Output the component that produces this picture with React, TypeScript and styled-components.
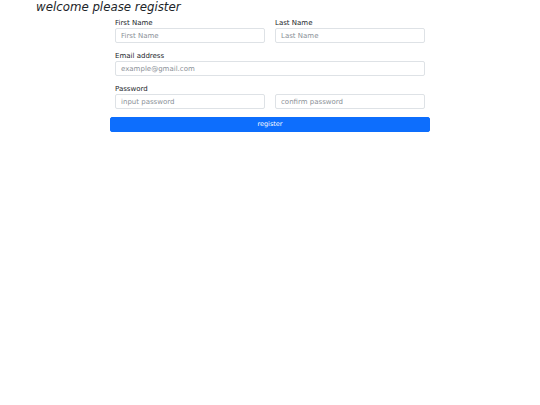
import React, { useState } from 'react'
import styled, { createGlobalStyle } from 'styled-components';

const GlobalStyle = createGlobalStyle`
  body {
    margin: 0;
    background: #fff;
    font-family: "DejaVu Sans", sans-serif;
    color: #212529;
  }
`;

const Page = styled.div`
  width: 540px;
  height: 405px;
`;

const Title = styled.h1`
  margin: 0 0 0 36px;
  font-size: 11.8px;
  line-height: 14px;
  font-weight: 400;
  font-style: italic;
  color: #212529;
`;

const Form = styled.form`
  margin-top: 5px;
  display: flex;
  flex-direction: column;
  align-items: center;
  gap: 9px;
`;

const Row = styled.div<{ cols: number }>`
  width: 310px;
  display: grid;
  grid-template-columns: ${(p) => `repeat(${p.cols}, 1fr)`};
  column-gap: 10px;
`;

const Field = styled.div`
  display: flex;
  flex-direction: column;
`;

const Label = styled.label`
  font-size: 7px;
  line-height: 9px;
  height: 9px;
  margin-bottom: 0;
  color: #212529;
`;

const Input = styled.input`
  box-sizing: border-box;
  width: 100%;
  height: 15px;
  margin: 0;
  padding: 0 5px;
  border: 1px solid #dee2e6;
  border-radius: 2px;
  background: #fff;
  font-family: "DejaVu Sans", sans-serif;
  font-size: 7px;
  color: #212529;
  outline: none;

  &::placeholder {
    color: #8a9097;
  }
`;

const Spacer = styled.div`
  height: 9px;
`;

const RegisterButton = styled.button`
  box-sizing: border-box;
  width: 320px;
  height: 15px;
  margin-top: -1px;
  padding: 0;
  border: 1px solid #0d6efd;
  border-radius: 2px;
  background: #0d6efd;
  color: #fff;
  font-family: "DejaVu Sans", sans-serif;
  font-size: 6.5px;
  line-height: 13px;
`;

function App() {
  const [first, setFirst] = useState('');
  const [last, setLast] = useState('');
  const [email, setEmail] = useState('');
  const [password, setPassword] = useState('');
  const [confirm, setConfirm] = useState('');

  return (
    <Page>
      <GlobalStyle />
      <Title>welcome please register</Title>
      <Form onSubmit={(e) => e.preventDefault()}>
        <Row cols={2}>
          <Field>
            <Label>First Name</Label>
            <Input placeholder='First Name' value={first} onChange={(e) => setFirst(e.target.value)} />
          </Field>
          <Field>
            <Label>Last Name</Label>
            <Input placeholder='Last Name' value={last} onChange={(e) => setLast(e.target.value)} />
          </Field>
        </Row>
        <Row cols={1}>
          <Field>
            <Label>Email address</Label>
            <Input placeholder='example@gmail.com' value={email} onChange={(e) => setEmail(e.target.value)} />
          </Field>
        </Row>
        <Row cols={2}>
          <Field>
            <Label>Password</Label>
            <Input type='password' placeholder='input password' value={password} onChange={(e) => setPassword(e.target.value)} />
          </Field>
          <Field>
            <Spacer />
            <Input type='password' placeholder='confirm password' value={confirm} onChange={(e) => setConfirm(e.target.value)} />
          </Field>
        </Row>
        <RegisterButton type='submit'>register</RegisterButton>
      </Form>
    </Page>
  )
}

export default App
